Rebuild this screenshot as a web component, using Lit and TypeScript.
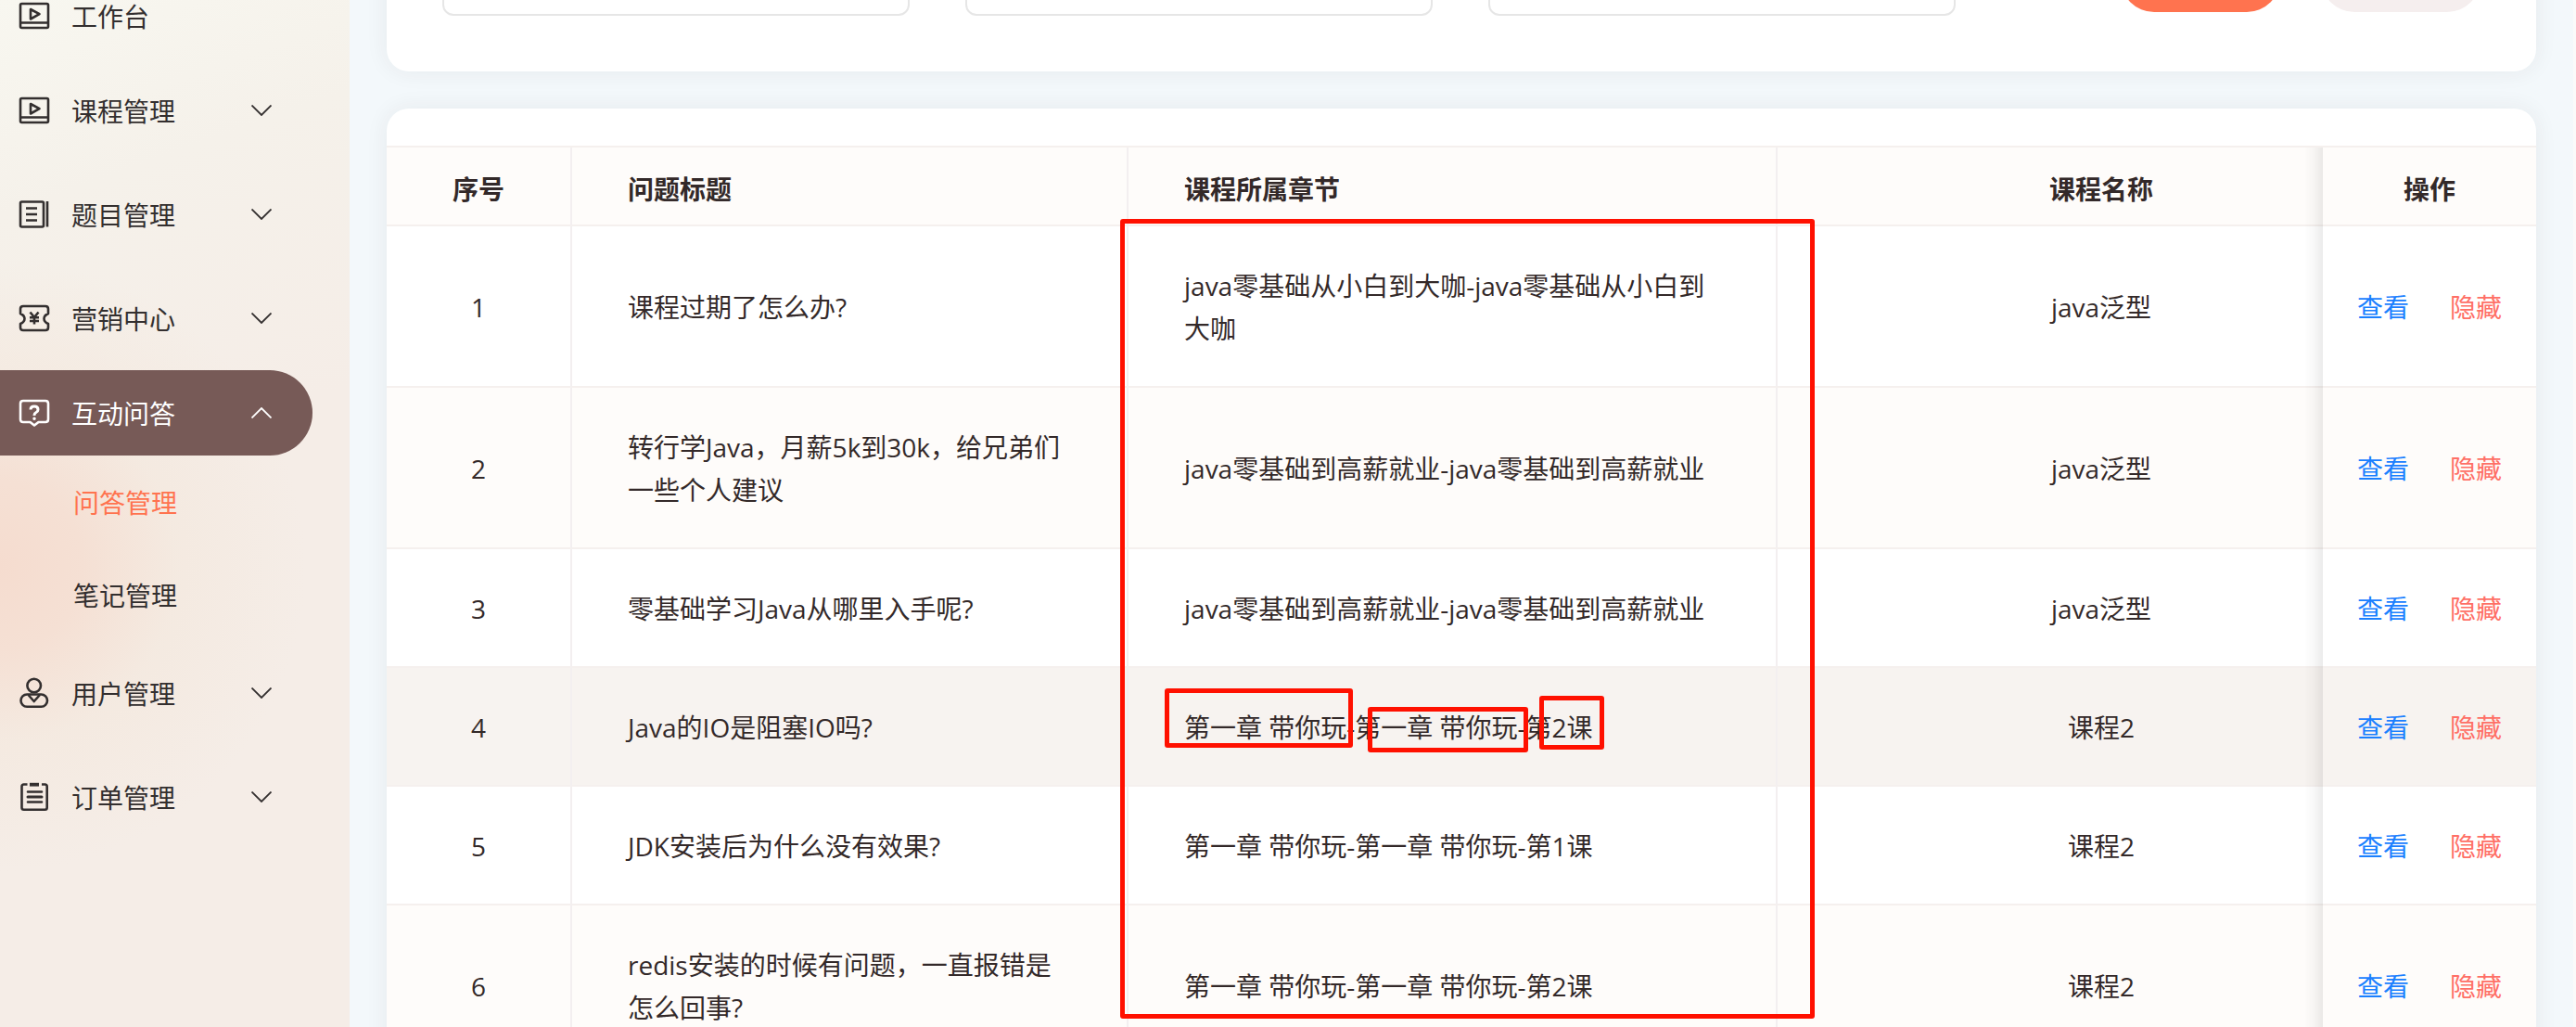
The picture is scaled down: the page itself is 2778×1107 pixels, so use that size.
import { LitElement, html, css, svg, nothing } from "lit";
import { customElement, state } from "lit/decorators.js";
import { classMap } from "lit/directives/class-map.js";

type IconName = "play" | "list" | "ticket" | "question" | "user" | "order";

const ICONS: Record<IconName, unknown> = {
  play: svg`<rect x="1" y="3" width="30" height="26" rx="1.5"/><path d="M1 23.5H31M12 9V19.500L21.500 14.200Z"/>`,
  list: svg`<rect x="1" y="2.500" width="25" height="27" rx="1.500"/><path d="M30 2V29.500M7 9.500H19M7 16H19M7 22.500H19"/>`,
  ticket: svg`<path d="M4 3H28Q31 3 31 6V11Q26.500 13 26.500 16.500T31 22V26Q31 29 28 29H4Q1 29 1 26V22Q5.500 20 5.500 16.500T1 11V6Q1 3 4 3Z"/><path d="M11.500 9.500L16 15L20.500 9.500M16 15V22.500M11 15.200H21M11 19H21"/>`,
  question: svg`<path d="M4 3H28Q31 3 31 6V23Q31 26 28 26H20.500L16 29.500L11.500 26H4Q1 26 1 23V6Q1 3 4 3Z"/><path stroke-width="3" d="M12 12.500Q12 9 16 9T20 12.500Q20 14.500 18 15.500T16 18.500V19"/><circle cx="16" cy="22.300" r="1" stroke-width="1.500" fill="currentColor"/>`,
  user: svg`<circle cx="15.700" cy="8" r="7.300"/><rect x="1.500" y="17.500" width="28.500" height="13.300" rx="6.600"/><path d="M9.500 18L15.700 25L22 18"/>`,
  order: svg`<path d="M8.500 2.500H4.700Q2.500 2.500 2.500 4.700V27.500Q2.500 29.700 4.700 29.700H27.500Q29.700 29.700 29.700 27.500V4.700Q29.700 2.500 27.500 2.500H24"/><path stroke-width="3.800" d="M11 2.700H21"/><path stroke-linecap="round" d="M9 10.500H24M9 21.500H24"/><path stroke-width="3" stroke-linecap="round" d="M9 16H24"/>`,
};

interface MenuEntry {
  label: string;
  icon: IconName;
  kind: "leaf" | "closed" | "open";
  children?: string[];
}

const MENU: MenuEntry[] = [
  { label: "工作台", icon: "play", kind: "leaf" },
  { label: "课程管理", icon: "play", kind: "closed" },
  { label: "题目管理", icon: "list", kind: "closed" },
  { label: "营销中心", icon: "ticket", kind: "closed" },
  { label: "互动问答", icon: "question", kind: "open", children: ["问答管理", "笔记管理"] },
  { label: "用户管理", icon: "user", kind: "closed" },
  { label: "订单管理", icon: "order", kind: "closed" },
];

interface Question {
  title: string;
  chapter: string;
  course: string;
}

const QUESTIONS: Question[] = [
  { title: "课程过期了怎么办?", chapter: "java零基础从小白到大咖-java零基础从小白到大咖", course: "java泛型" },
  { title: "转行学Java，月薪5k到30k，给兄弟们一些个人建议", chapter: "java零基础到高薪就业-java零基础到高薪就业", course: "java泛型" },
  { title: "零基础学习Java从哪里入手呢?", chapter: "java零基础到高薪就业-java零基础到高薪就业", course: "java泛型" },
  { title: "Java的IO是阻塞IO吗?", chapter: "第一章 带你玩-第一章 带你玩-第2课", course: "课程2" },
  { title: "JDK安装后为什么没有效果?", chapter: "第一章 带你玩-第一章 带你玩-第1课", course: "课程2" },
  { title: "redis安装的时候有问题，一直报错是怎么回事?", chapter: "第一章 带你玩-第一章 带你玩-第2课", course: "课程2" },
];

@customElement("side-menu")
export class SideMenu extends LitElement {
  @state() private current = "问答管理";

  static styles = css`
    :host {
      display: block;
      box-sizing: border-box;
      overflow: hidden;
      background:
        radial-gradient(circle at 0 610px, #f5dccf 0, #f5e0d4 90px, rgba(244, 233, 223, 0.8) 190px, rgba(245, 236, 228, 0) 330px),
        linear-gradient(160deg, #f8f7f0 0, #f5f1ea 220px, #f5ede7 520px);
    }
    .menu {
      margin: -29px 0 0;
      padding: 0;
      list-style: none;
    }
    .group + .group {
      margin-top: 10px;
    }
    .group.closed + .group.closed {
      margin-top: 20px;
    }
    .entry {
      display: flex;
      align-items: center;
      box-sizing: border-box;
      width: calc(100% - 40px);
      height: 92px;
      padding: 0 44px 0 21px;
      border: 0;
      border-radius: 0 46px 46px 0;
      background: none;
      color: #332f2f;
      font: inherit;
      text-align: left;
      cursor: pointer;
    }
    .entry.active {
      background: #775a57;
      color: #fff;
    }
    .icon {
      flex: none;
      width: 32px;
      height: 32px;
      margin-right: 24px;
      fill: none;
      stroke: currentColor;
      stroke-width: 2.6;
      stroke-linejoin: round;
      overflow: visible;
    }
    .label {
      flex: 1;
    }
    .arrow {
      flex: none;
      width: 22px;
      height: 12px;
      fill: none;
      stroke: currentColor;
      stroke-width: 1.8;
    }
    .sub {
      margin: 0;
      padding: 0;
      list-style: none;
    }
    .link {
      display: flex;
      align-items: center;
      height: 100px;
      padding-left: 79px;
      color: #332f2f;
      text-decoration: none;
    }
    .link.current {
      color: #ff734f;
    }
  `;

  render() {
    return html`<nav>
      <ul class="menu">
        ${MENU.map(
          (m) => html`<li class="group ${m.kind}">
            <button class=${classMap({ entry: true, active: m.kind === "open" })} type="button">
              <svg class="icon" viewBox="0 0 32 32" aria-hidden="true">${ICONS[m.icon]}</svg>
              <span class="label">${m.label}</span>
              ${m.kind === "leaf"
                ? nothing
                : html`<svg class="arrow" viewBox="0 0 22 12" aria-hidden="true">
                    <path d=${m.kind === "open" ? "M0.500 11.500L11 1L21.500 11.500" : "M0.500 0.500L11 11L21.500 0.500"} />
                  </svg>`}
            </button>
            ${m.children
              ? html`<ul class="sub">
                  ${m.children.map(
                    (c) => html`<li>
                      <a
                        class=${classMap({ link: true, current: c === this.current })}
                        href="#"
                        @click=${(e: Event) => {
                          e.preventDefault();
                          this.current = c;
                        }}
                        >${c}</a
                      >
                    </li>`
                  )}
                </ul>`
              : nothing}
          </li>`
        )}
      </ul>
    </nav>`;
  }
}

@customElement("question-table")
export class QuestionTable extends LitElement {
  static styles = css`
    :host {
      display: block;
      overflow: hidden;
      border-top: 2px solid #f5f0ee;
    }
    .table {
      width: 100%;
      min-width: 2430px;
      table-layout: fixed;
      border-collapse: separate;
      border-spacing: 0;
      color: #332929;
      line-height: 46px;
    }
    .c-index {
      width: 200px;
    }
    .c-title {
      width: 600px;
    }
    .c-chapter {
      width: 700px;
    }
    .c-action {
      width: 230px;
    }
    .cell {
      box-sizing: border-box;
      padding: 41px 60px 39px;
      border-bottom: 2px solid #f5f0ee;
      border-right: 2px solid #f3eff0;
      background: #fff;
      font-weight: 400;
      text-align: left;
    }
    .head .cell {
      padding-top: 22px;
      padding-bottom: 15px;
      background: #fefcfa;
      font-weight: 700;
    }
    .row:nth-child(even) .cell {
      background: #fefcfa;
    }
    .row.hovered .cell {
      background: #f7f3f0;
    }
    .cell.center {
      text-align: center;
    }
    .cell.fixed {
      position: sticky;
      right: 0;
      padding-left: 0;
      padding-right: 0;
      border-right: 0;
      text-align: center;
    }
    .cell.fixed::before {
      content: "";
      position: absolute;
      top: 0;
      bottom: -2px;
      left: -20px;
      width: 20px;
      background: linear-gradient(to left, rgba(0, 0, 0, 0.08), rgba(0, 0, 0, 0.03) 45%, transparent);
    }
    .actions {
      display: flex;
      justify-content: center;
      gap: 44px;
    }
    .act {
      padding: 0;
      border: 0;
      background: none;
      font: inherit;
      line-height: 46px;
      cursor: pointer;
    }
    .view {
      color: #1a80ff;
    }
    .hide {
      color: #ff6f66;
    }
  `;

  render() {
    return html`<table class="table">
      <colgroup>
        <col class="c-index" />
        <col class="c-title" />
        <col class="c-chapter" />
        <col />
        <col class="c-action" />
      </colgroup>
      <thead>
        <tr class="head">
          <th class="cell center" scope="col">序号</th>
          <th class="cell" scope="col">问题标题</th>
          <th class="cell" scope="col">课程所属章节</th>
          <th class="cell center" scope="col">课程名称</th>
          <th class="cell fixed" scope="col">操作</th>
        </tr>
      </thead>
      <tbody>
        ${QUESTIONS.map(
          (q, i) => html`<tr class=${classMap({ row: true, hovered: i === 3 })}>
            <td class="cell center">${i + 1}</td>
            <td class="cell">${q.title}</td>
            <td class="cell">${q.chapter}</td>
            <td class="cell center">${q.course}</td>
            <td class="cell fixed">
              <div class="actions">
                <button class="act view" type="button">查看</button>
                <button class="act hide" type="button">隐藏</button>
              </div>
            </td>
          </tr>`
        )}
      </tbody>
    </table>`;
  }
}

@customElement("app-root")
export class AppRoot extends LitElement {
  static styles = css`
    :host {
      display: grid;
      grid-template-columns: 377px minmax(0, 1fr) 3px;
      position: relative;
      height: 100vh;
      overflow: hidden;
      background: #f3f8fb;
      font-family: "Open Sans", "Noto Sans CJK SC", sans-serif;
      font-size: 28px;
    }
    .main {
      display: flex;
      flex-direction: column;
      gap: 40px;
      margin-top: -123px;
      padding: 0 40px;
    }
    .track {
      background: #fafafa;
    }
    .card {
      border-radius: 24px;
      background: #fff;
      box-shadow: 0 0 24px rgba(60, 40, 40, 0.07);
    }
    .filters {
      display: flex;
      align-items: center;
      gap: 60px;
      padding: 60px;
    }
    .field {
      box-sizing: border-box;
      flex: none;
      width: 504px;
      height: 80px;
      padding: 0 24px;
      border: 2px solid #e6e6e6;
      border-radius: 12px;
      background: #fff;
      font: inherit;
    }
    .buttons {
      display: flex;
      gap: 44px;
      margin-left: auto;
    }
    .btn {
      width: 172px;
      height: 72px;
      border: 0;
      border-radius: 36px;
      background: #f5eeee;
      font: inherit;
    }
    .btn.primary {
      background: #ff734f;
    }
    .listing {
      padding-top: 40px;
      overflow: hidden;
    }
    .mark {
      position: absolute;
      box-sizing: border-box;
      border: 5px solid #ff1000;
      border-radius: 3px;
      pointer-events: none;
    }
    .m-column {
      left: 1208px;
      top: 236px;
      width: 749px;
      height: 862px;
    }
    .m-first {
      left: 1256px;
      top: 742px;
      width: 203px;
      height: 64px;
    }
    .m-second {
      left: 1475px;
      top: 762px;
      width: 173px;
      height: 49px;
    }
    .m-third {
      left: 1660px;
      top: 750px;
      width: 70px;
      height: 58px;
    }
  `;

  render() {
    return html`
      <side-menu></side-menu>
      <main class="main">
        <form class="card filters" @submit=${(e: Event) => e.preventDefault()}>
          <input class="field" type="text" aria-label="问题标题" />
          <input class="field" type="text" aria-label="课程所属章节" />
          <input class="field" type="text" aria-label="课程名称" />
          <div class="buttons">
            <button class="btn primary" type="submit" aria-label="搜索"></button>
            <button class="btn" type="reset" aria-label="重置"></button>
          </div>
        </form>
        <section class="card listing">
          <question-table></question-table>
        </section>
      </main>
      <div class="track"></div>
      <div class="mark m-column"></div>
      <div class="mark m-first"></div>
      <div class="mark m-second"></div>
      <div class="mark m-third"></div>
    `;
  }
}
